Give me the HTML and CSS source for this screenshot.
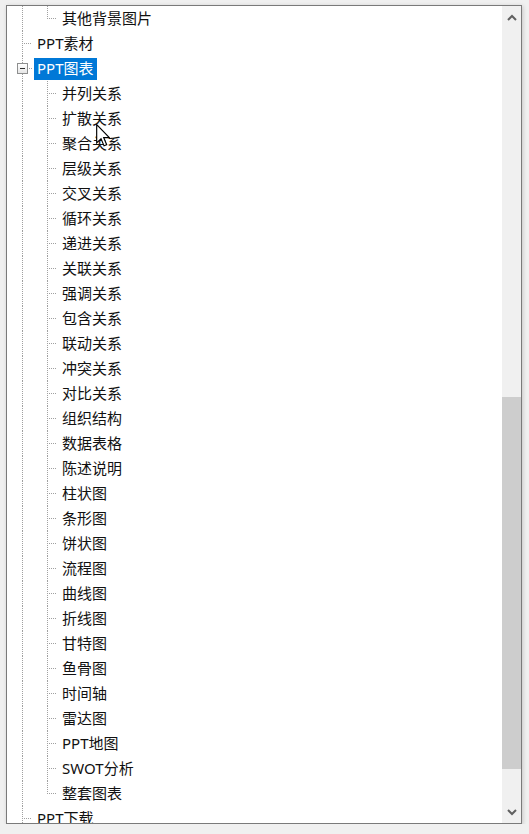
FILE: index.html
```html
<!DOCTYPE html>
<html lang="zh-CN">
<head>
<meta charset="utf-8">
<title>Tree</title>
<link rel="stylesheet" href="styles.css">
</head>
<body>
<div class="frame">
  <div class="tree">
    <div class="row"><span class="c v"></span><span class="c l"></span><span class="label">其他背景图片</span></div>
    <div class="row"><span class="c t"></span><span class="label">PPT素材</span></div>
    <div class="row"><span class="c bx"><span class="box"></span></span><span class="label sel">PPT图表</span></div>
    <div class="row"><span class="c v"></span><span class="c t"></span><span class="label">并列关系</span></div>
    <div class="row"><span class="c v"></span><span class="c t"></span><span class="label">扩散关系</span></div>
    <div class="row"><span class="c v"></span><span class="c t"></span><span class="label">聚合关系</span></div>
    <div class="row"><span class="c v"></span><span class="c t"></span><span class="label">层级关系</span></div>
    <div class="row"><span class="c v"></span><span class="c t"></span><span class="label">交叉关系</span></div>
    <div class="row"><span class="c v"></span><span class="c t"></span><span class="label">循环关系</span></div>
    <div class="row"><span class="c v"></span><span class="c t"></span><span class="label">递进关系</span></div>
    <div class="row"><span class="c v"></span><span class="c t"></span><span class="label">关联关系</span></div>
    <div class="row"><span class="c v"></span><span class="c t"></span><span class="label">强调关系</span></div>
    <div class="row"><span class="c v"></span><span class="c t"></span><span class="label">包含关系</span></div>
    <div class="row"><span class="c v"></span><span class="c t"></span><span class="label">联动关系</span></div>
    <div class="row"><span class="c v"></span><span class="c t"></span><span class="label">冲突关系</span></div>
    <div class="row"><span class="c v"></span><span class="c t"></span><span class="label">对比关系</span></div>
    <div class="row"><span class="c v"></span><span class="c t"></span><span class="label">组织结构</span></div>
    <div class="row"><span class="c v"></span><span class="c t"></span><span class="label">数据表格</span></div>
    <div class="row"><span class="c v"></span><span class="c t"></span><span class="label">陈述说明</span></div>
    <div class="row"><span class="c v"></span><span class="c t"></span><span class="label">柱状图</span></div>
    <div class="row"><span class="c v"></span><span class="c t"></span><span class="label">条形图</span></div>
    <div class="row"><span class="c v"></span><span class="c t"></span><span class="label">饼状图</span></div>
    <div class="row"><span class="c v"></span><span class="c t"></span><span class="label">流程图</span></div>
    <div class="row"><span class="c v"></span><span class="c t"></span><span class="label">曲线图</span></div>
    <div class="row"><span class="c v"></span><span class="c t"></span><span class="label">折线图</span></div>
    <div class="row"><span class="c v"></span><span class="c t"></span><span class="label">甘特图</span></div>
    <div class="row"><span class="c v"></span><span class="c t"></span><span class="label">鱼骨图</span></div>
    <div class="row"><span class="c v"></span><span class="c t"></span><span class="label">时间轴</span></div>
    <div class="row"><span class="c v"></span><span class="c t"></span><span class="label">雷达图</span></div>
    <div class="row"><span class="c v"></span><span class="c t"></span><span class="label">PPT地图</span></div>
    <div class="row"><span class="c v"></span><span class="c t"></span><span class="label">SWOT分析</span></div>
    <div class="row"><span class="c v"></span><span class="c l"></span><span class="label">整套图表</span></div>
    <div class="row"><span class="c t"></span><span class="label">PPT下载</span></div>
  </div>
  <div class="scrollbar">
    <div class="sb-btn"><svg width="10" height="7" viewBox="0 0 10 7"><polyline points="1,6 5,2 9,6" fill="none" stroke="#606060" stroke-width="2"/></svg></div>
    <div class="sb-track"><div class="thumb"></div></div>
    <div class="sb-btn"><svg width="10" height="7" viewBox="0 0 10 7"><polyline points="1,1 5,5 9,1" fill="none" stroke="#606060" stroke-width="2"/></svg></div>
  </div>
  <svg class="cursor" width="14" height="23" viewBox="0 0 12 20"><polygon points="0.5,0.5 0.5,16.5 4.3,12.8 6.9,19 9.2,18 6.6,11.8 11.5,11.8" fill="#fff" stroke="#000" stroke-width="1"/></svg>
</div>
</body>
</html>
```
FILE: styles.css
```css
html, body {
  margin: 0;
  padding: 0;
  background: #f0f0f0;
}
body {
  padding: 5px 0 0 6px;
  font-family: "Noto Sans", "Noto Sans CJK SC", sans-serif;
  font-size: 15px;
  color: #000;
}
.frame {
  position: relative;
  width: 514px;
  height: 817px;
  border: 1px solid #7a7a7a;
  background: #fff;
  display: flex;
  box-shadow: 1px 1px 4px rgba(0,0,0,0.18);
}
.tree {
  flex: 1;
  overflow: hidden;
  display: flex;
  flex-direction: column;
}
.row {
  height: 25px;
  flex: 0 0 25px;
  display: flex;
  align-items: center;
}
.c {
  width: 25px;
  height: 25px;
  flex: 0 0 25px;
  box-sizing: border-box;
}
.v {
  background: repeating-linear-gradient(to bottom, #a0a0a0 0 1px, transparent 1px 2px) 15px 0 / 1px 100% no-repeat;
}
.t {
  background:
    repeating-linear-gradient(to right, #a0a0a0 0 1px, transparent 1px 2px) 17px 12px / 9px 1px no-repeat,
    repeating-linear-gradient(to bottom, #a0a0a0 0 1px, transparent 1px 2px) 15px 0 / 1px 100% no-repeat;
}
.l {
  background:
    repeating-linear-gradient(to right, #a0a0a0 0 1px, transparent 1px 2px) 17px 12px / 9px 1px no-repeat,
    repeating-linear-gradient(to bottom, #a0a0a0 0 1px, transparent 1px 2px) 15px 0 / 1px 13px no-repeat;
}
.bx {
  padding: 7px 0 0 10px;
  background:
    repeating-linear-gradient(to right, #a0a0a0 0 1px, transparent 1px 2px) 22px 12px / 4px 1px no-repeat,
    repeating-linear-gradient(to bottom, #a0a0a0 0 1px, transparent 1px 2px) 15px 0 / 1px 100% no-repeat;
}
.box {
  display: block;
  width: 9px;
  height: 9px;
  border: 1px solid #8e8f8f;
  background:
    linear-gradient(#2f2f2f, #2f2f2f) 2px 4px / 5px 1px no-repeat,
    linear-gradient(#ffffff, #e6e6e6);
}
.label {
  margin-left: 2px;
  padding: 0 3px 2px;
  height: 20px;
  line-height: 20px;
  white-space: nowrap;
  color: #111;
}
.label.sel {
  background: #0078d7;
  color: #fff;
}
.scrollbar {
  width: 19px;
  flex: 0 0 19px;
  background: #f0f0f0;
  display: flex;
  flex-direction: column;
}
.sb-btn {
  height: 22px;
  flex: 0 0 22px;
  display: flex;
  align-items: center;
  justify-content: center;
}
.sb-track {
  flex: 1;
}
.thumb {
  margin-top: 369px;
  height: 372px;
  background: #cdcdcd;
}
.cursor {
  position: absolute;
  left: 89px;
  top: 118px;
}
```
